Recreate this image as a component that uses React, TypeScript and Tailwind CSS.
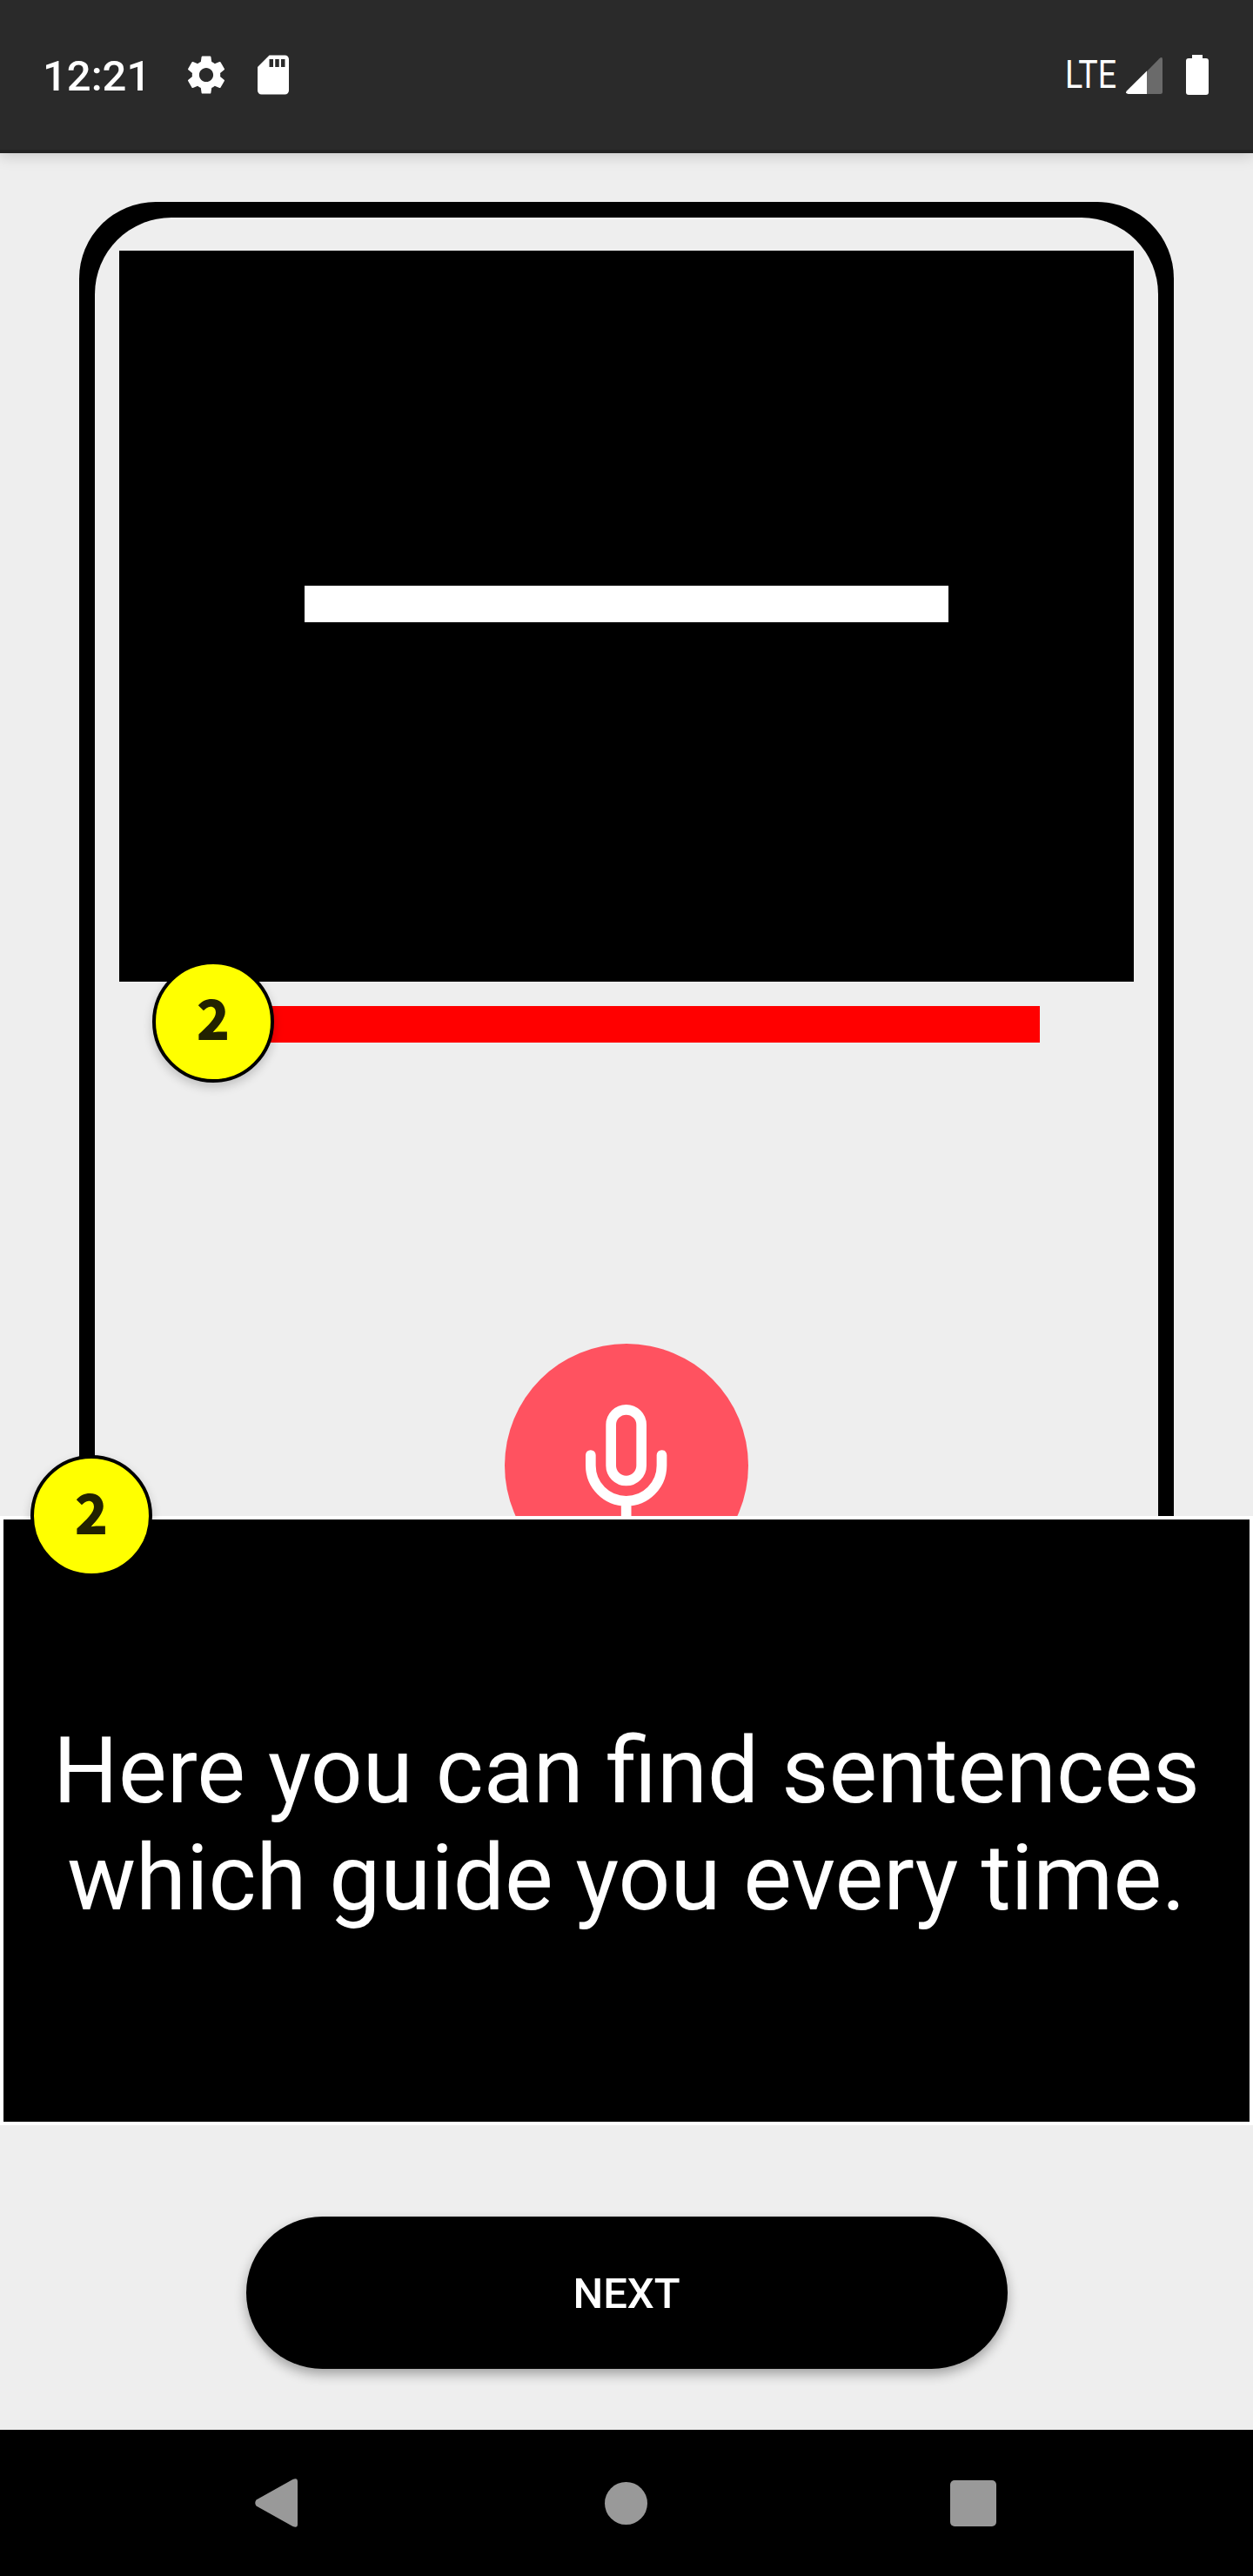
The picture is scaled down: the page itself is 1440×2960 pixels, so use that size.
import React from "react";
import { MdSettings, MdSdCard } from "react-icons/md";

function StatusBar() {
  return (
    <header className="relative z-10 flex h-[176px] shrink-0 items-start justify-between border-b-4 border-[#222222] bg-[#2a2a2a] pl-[49px] pr-[51px] pt-[57px] text-white shadow-[0_3px_16px_rgba(0,0,0,0.17)]">
      <div className="flex items-start">
        <span className="mt-px w-[121px] text-[49px] font-medium leading-[60px]">12:21</span>
        <MdSettings className="ml-[40px] mt-[2px] size-[54px]" />
        <MdSdCard className="ml-[23px] mt-[2px] size-[54px]" />
      </div>
      <div className="flex items-start">
        <span className="mt-[2px] w-[70px] origin-left scale-x-[0.865] text-[43.5px] leading-[56px]">LTE</span>
        <svg className="mt-[9px] h-[42px] w-[42px]" viewBox="0 0 42 42">
          <path d="M24 16 38.5 1.2Q42 -1.5 42 2.5V39.500Q42 42 39.500 42H24Z" fill="#6a6a6a" />
          <path d="M24 15.500V42H2.500Q-1.200 41.500 .8 38.500Z" fill="#fff" />
        </svg>
        <div className="ml-[27px] mt-[6px] flex w-[26px] flex-col items-center">
          <div className="h-1 w-3 bg-white" />
          <div className="h-[42px] w-[26px] rounded-[3px] bg-white" />
        </div>
      </div>
    </header>
  );
}

function Badge({ className }: { className: string }) {
  return (
    <div
      className={
        "absolute z-20 flex size-[140px] items-center justify-center rounded-full border-4 border-black bg-[#ffff00] pb-[13px] font-['Noto_Sans_CJK_JP',sans-serif] text-[63px] font-black leading-none text-[#222200] shadow-[0_5px_12px_rgba(0,0,0,0.2)] " +
        className
      }
    >
      2
    </div>
  );
}

function MicButton() {
  return (
    <div className="flex size-[280px] shrink-0 justify-center rounded-full bg-[#ff5260] pt-[70px]">
      <svg className="h-[140px] w-[93.33px]" viewBox="0 0 8 12" fill="none" stroke="#fff" strokeLinecap="round">
        <rect x="2.5" y=".5" width="3" height="7" rx="1.5" />
        <path d="M.5 4.970V6a3.500 3.500 0 0 0 7 0V4.970M4 9.500v2" />
      </svg>
    </div>
  );
}

function PhonePreview() {
  return (
    <main className="relative flex h-[1566px] shrink-0 justify-center px-[91px] pt-[56px]">
      <div className="h-[1510px] w-full overflow-hidden">
        <div className="h-[1800px] rounded-[88px] bg-black p-[18px]">
          <div className="flex h-full flex-col items-center rounded-[88px] bg-[#eeeeee] pt-[38px]">
            <div className="flex h-[840px] w-[1166px] shrink-0 justify-center bg-black pt-[385px]">
              <div className="h-[42px] w-[740px] bg-white" />
            </div>
            <div className="mt-7 h-[42px] w-[950px] shrink-0 bg-[#ff0000]" />
            <div className="mt-[346px]">
              <MicButton />
            </div>
          </div>
        </div>
      </div>
      <Badge className="left-[175px] top-[928px]" />
    </main>
  );
}

function GuidePanel() {
  return (
    <section className="relative flex h-[700px] shrink-0 items-center justify-center border-4 border-white bg-black">
      <Badge className="-top-[74px] left-[31px]" />
      <p className="mt-[9px] text-center text-[105px] leading-[123px] text-white">
        Here you can find sentences
        <br />
        which guide you every time.
      </p>
    </section>
  );
}

function NavBar() {
  return (
    <nav className="flex h-[168px] shrink-0 items-center bg-black pl-[293px]">
      <svg className="h-[56px] w-[50px]" viewBox="0 0 50 56">
        <path d="M1.500 24.500 43.500 1Q49 -1.500 49 3.500V52.500Q49 57.500 43.500 55L1.500 31.500Q-1 28 1.500 24.500Z" fill="#999" />
      </svg>
      <div className="ml-[352px] size-[49px] rounded-full bg-[#999999]" />
      <div className="ml-[348px] size-[53px] rounded-[5px] bg-[#999999]" />
    </nav>
  );
}

export default function App() {
  return (
    <div className="flex h-[2960px] w-[1440px] flex-col overflow-hidden bg-[#eeeeee] font-['Roboto',sans-serif]">
      <StatusBar />
      <PhonePreview />
      <GuidePanel />
      <div className="flex h-[350px] shrink-0 justify-center pt-[105px]">
        <button className="h-[175px] w-[875px] rounded-full bg-black pt-[2px] text-[49px] font-medium leading-none text-white shadow-[0_6px_14px_rgba(0,0,0,0.33)]">
          NEXT
        </button>
      </div>
      <NavBar />
    </div>
  );
}
